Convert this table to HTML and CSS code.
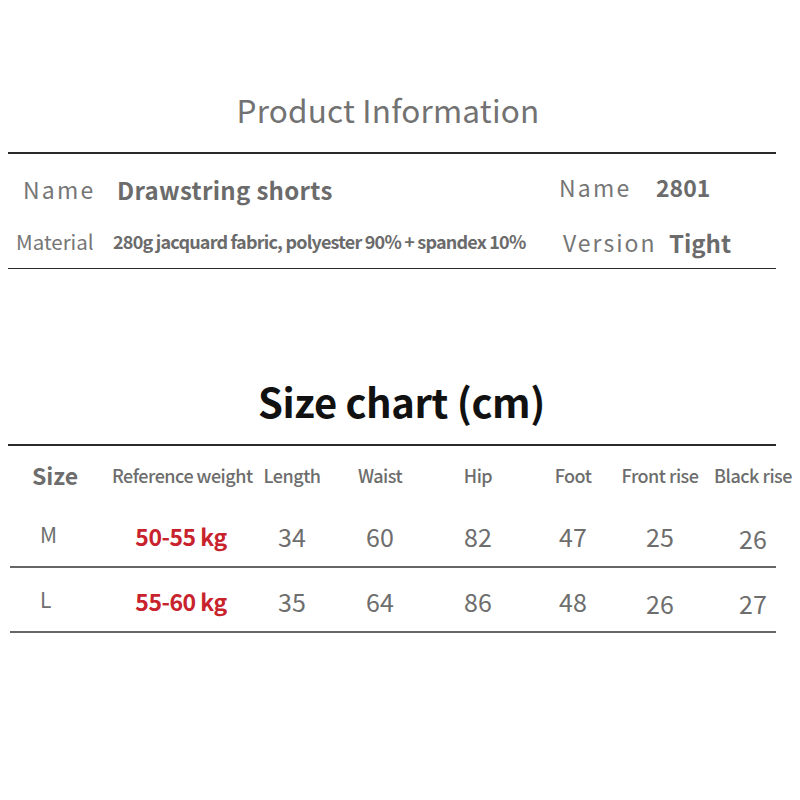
FILE: index.html
```html
<!DOCTYPE html>
<html>
<head>
<meta charset="utf-8">
<link rel="stylesheet" href="styles.css">
</head>
<body>
<div class="page">
  <h1 class="title">Product Information</h1>
  <div class="rule dark"></div>
  <div class="info">
    <div class="info-row r1">
      <span class="lab lab-name">Name</span>
      <span class="val">Drawstring shorts</span>
      <span class="lab lab-right">Name</span>
      <span class="val val-right">2801</span>
    </div>
    <div class="info-row r2">
      <span class="lab lab-mat">Material</span>
      <span class="val val-mat">280g jacquard fabric, polyester 90% + spandex 10%</span>
      <span class="lab lab-right2">Version</span>
      <span class="val val-right2">Tight</span>
    </div>
  </div>
  <div class="rule dark"></div>

  <h2 class="chart-title">Size chart (cm)</h2>
  <div class="rule dark"></div>
  <div class="trow thead">
    <span class="c1 size-h">Size</span>
    <span>Reference weight</span>
    <span>Length</span>
    <span>Waist</span>
    <span>Hip</span>
    <span>Foot</span>
    <span>Front rise</span>
    <span>Black rise</span>
  </div>
  <div class="trow tbody rm">
    <span class="c1 sz">M</span>
    <span class="kg">50-55 kg</span>
    <span>34</span>
    <span>60</span>
    <span>82</span>
    <span>47</span>
    <span>25</span>
    <span class="low">26</span>
  </div>
  <div class="rule grey"></div>
  <div class="trow tbody rl">
    <span class="c1 sz">L</span>
    <span class="kg">55-60 kg</span>
    <span>35</span>
    <span>64</span>
    <span>86</span>
    <span>48</span>
    <span class="low">26</span>
    <span class="low">27</span>
  </div>
  <div class="rule grey"></div>
</div>
</body>
</html>
```

FILE: styles.css
```css
html, body {
  margin: 0;
  padding: 0;
  background: #ffffff;
}
body {
  width: 800px;
  height: 800px;
  overflow: hidden;
  font-family: "Noto Sans CJK SC", "Open Sans", sans-serif;
  color: #6f6f6f;
}
.page {
  padding-top: 86px;
  display: flex;
  flex-direction: column;
}
.title {
  margin: 0;
  height: 66px;
  font-size: 31.5px;
  font-weight: 400;
  color: #727272;
  text-align: center;
  line-height: 46px;
  padding-right: 24px;
  letter-spacing: 0.2px;
}
.rule {
  margin-left: 8px;
  width: 768px;
}
.rule.dark {
  height: 1.5px;
  background: #2a2a2a;
}
.rule.grey {
  margin-left: 10px;
  width: 766px;
  height: 2px;
  background: #666;
}
.info {
  display: flex;
  flex-direction: column;
}
.info-row {
  display: flex;
  align-items: center;
  white-space: nowrap;
}
.info-row.r1 {
  height: 70px;
}
.info-row.r2 {
  height: 44px;
  padding-bottom: 9px;
  box-sizing: border-box;
}
.lab {
  font-weight: 400;
  color: #767676;
}
.val {
  font-weight: 700;
  color: #6b6b6b;
}
.lab-name {
  font-size: 23px;
  letter-spacing: 2.2px;
  margin-left: 23px;
  width: 94px;
}
.r1 .val:nth-child(2) {
  font-size: 24px;
  width: 442px;
  letter-spacing: 0.3px;
  padding-top: 2px;
}
.lab-right {
  font-size: 23px;
  letter-spacing: 2.2px;
  width: 97px;
  padding-bottom: 4px;
}
.val-right {
  font-size: 23px;
  padding-bottom: 4px;
}
.lab-mat {
  font-size: 20.5px;
  margin-left: 16px;
  width: 97px;
  letter-spacing: 0px;
}
.val-mat {
  font-size: 18px;
  font-weight: 700;
  letter-spacing: -0.8px;
  width: 450px;
}
.lab-right2 {
  font-size: 23px;
  letter-spacing: 2px;
  width: 106px;
  padding-top: 2px;
}
.val-right2 {
  font-size: 24px;
  padding-top: 2px;
}
.chart-title {
  margin: 100px 0 0 0;
  height: 75px;
  font-size: 40px;
  font-weight: 700;
  color: #111;
  text-align: center;
  line-height: 64px;
  padding-left: 3px;
  letter-spacing: -0.4px;
}
.trow {
  display: grid;
  grid-template-columns: 102px 138px 84px 92px 104px 86px 88px 98px;
  margin-left: 10px;
  width: 792px;
  align-items: center;
  white-space: nowrap;
  box-sizing: border-box;
}
.trow span {
  text-align: center;
}
.trow .c1 {
  text-align: left;
}
.thead {
  height: 58px;
  font-size: 18px;
  letter-spacing: -0.5px;
  color: #6d6d6d;
  font-weight: 500;
}
.thead .size-h {
  padding-left: 22px;
  font-size: 23px;
  font-weight: 700;
  letter-spacing: 0;
  color: #6d6d6d;
}
.tbody {
  font-size: 25px;
  color: #6e6e6e;
  font-weight: 400;
}
.rm {
  height: 62px;
  padding-top: 2px;
}
.rl {
  height: 63px;
  padding-top: 3px;
}
.tbody .sz {
  padding-left: 30px;
  font-size: 21px;
  padding-bottom: 4px;
}
.tbody .kg {
  color: #c8232d;
  font-weight: 700;
  font-size: 23px;
  letter-spacing: -0.5px;
}
.tbody .low {
  padding-top: 4px;
}
```
